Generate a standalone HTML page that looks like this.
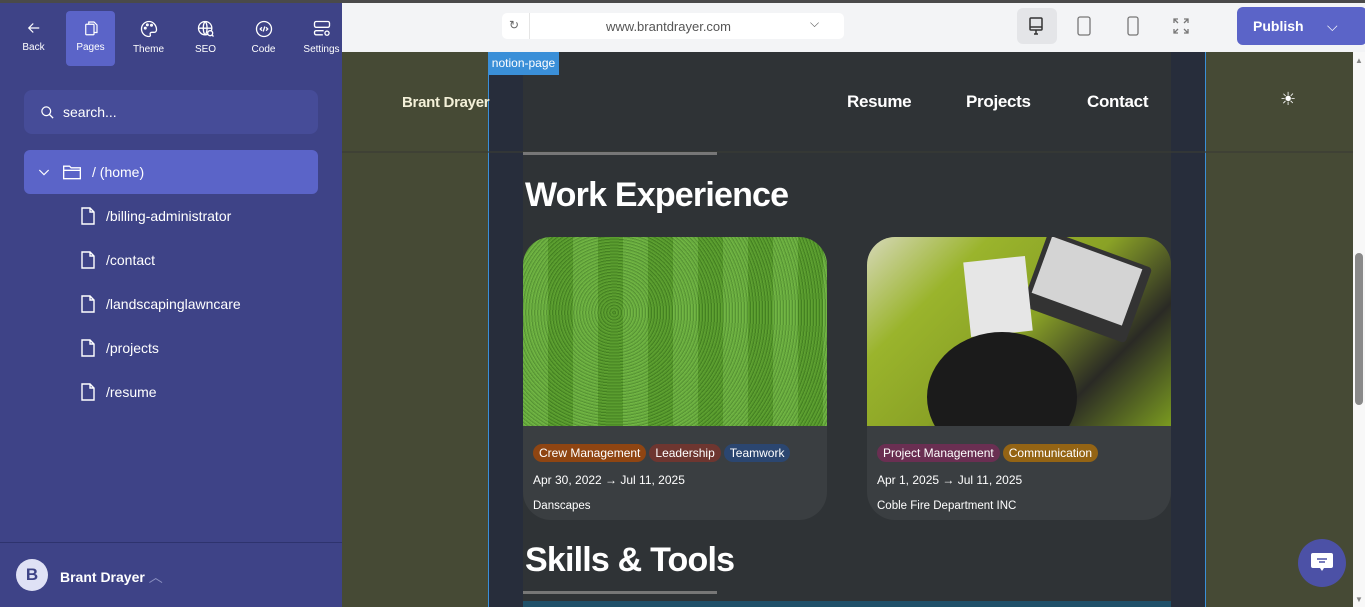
<!DOCTYPE html>
<html><head><meta charset="utf-8"><style>
*{margin:0;padding:0;box-sizing:border-box}
body{width:1365px;height:607px;overflow:hidden;font-family:"Liberation Sans",sans-serif;background:#464a35;position:relative}
.abs{position:absolute}
.side{left:0;top:0;width:342px;height:607px;background:#3e4387;color:#fff}
.topline{left:0;top:0;width:1365px;height:3px;background:#4a4a4a;z-index:5}
.tool{position:absolute;top:11px;width:49px;height:55px;text-align:center;font-size:10px;color:#fff}
.tool svg{display:block;margin:8px auto 5px}
.item{position:absolute;left:80px;font-size:14px;color:#fff;display:flex;align-items:center;gap:10px}
.tb{left:342px;top:3px;width:1023px;height:49px;background:#f3f4f6}
.tag{display:inline-block;font-size:12px;color:#fff;padding:2px 6px;border-radius:10px;margin-right:3px;line-height:14px}
.card{position:absolute;top:237px;width:304px;height:283px;background:#3a3e41;border-radius:28px;overflow:hidden}
.card .img{height:189px;position:relative;overflow:hidden}
.card .body{padding:18px 10px;color:#fff;font-size:12px}
h2{position:absolute;color:#fff;font-weight:bold;letter-spacing:-0.8px}
</style></head><body>
<div class="abs topline"></div>
<div class="abs side">
  <div class="tool" style="left:9px;"><svg width="18" height="18" viewBox="0 0 24 24" fill="none" stroke="#fff" stroke-width="1.6"><path d="M19 12H5M11 6l-6 6 6 6"/></svg>Back</div>
  <div class="tool" style="left:66px;background:#5b64c8;border-radius:4px;"><svg width="18" height="18" viewBox="0 0 24 24" fill="none" stroke="#fff" stroke-width="1.6"><path d="M9 7V4h7l4 4v10h-4"/><rect x="5" y="7" width="11" height="14" rx="1"/></svg>Pages</div>
  <div class="tool" style="left:124px;"><svg width="20" height="20" viewBox="0 0 24 24" fill="none" stroke="#fff" stroke-width="1.6"><path d="M12 3a9 9 0 100 18c1.5 0 2-1 1.5-2.3-.6-1.5.3-2.7 1.8-2.7H18a3 3 0 003-3c0-5.5-4-10-9-10z"/><circle cx="7.5" cy="11" r="1"/><circle cx="10" cy="7" r="1"/><circle cx="15" cy="7.5" r="1"/></svg>Theme</div>
  <div class="tool" style="left:181px;"><svg width="20" height="20" viewBox="0 0 24 24" fill="none" stroke="#fff" stroke-width="1.6"><circle cx="11" cy="11" r="8"/><path d="M3 11h16M11 3c-3 3-3 13 0 16M11 3c3 3 3 13 0 16"/><circle cx="17" cy="17" r="3" fill="#3e4387"/><path d="M19 19l2 2"/></svg>SEO</div>
  <div class="tool" style="left:239px;"><svg width="20" height="20" viewBox="0 0 24 24" fill="none" stroke="#fff" stroke-width="1.6"><circle cx="12" cy="12" r="9"/><path d="M9.5 10l-2 2 2 2M14.5 10l2 2-2 2M13 9l-2 6"/></svg>Code</div>
  <div class="tool" style="left:297px;"><svg width="20" height="20" viewBox="0 0 24 24" fill="none" stroke="#fff" stroke-width="1.6"><rect x="3" y="3" width="18" height="7" rx="2"/><path d="M14 14H5a2 2 0 00-2 2v1a2 2 0 002 2h8"/><circle cx="18" cy="17" r="2.5"/></svg>Settings</div>
  <div class="abs" style="left:24px;top:90px;width:294px;height:44px;background:#464c98;border-radius:8px;display:flex;align-items:center;padding-left:16px;font-size:14px;gap:8px"><svg width="15" height="15" viewBox="0 0 24 24" fill="none" stroke="#fff" stroke-width="2"><circle cx="10" cy="10" r="7"/><path d="M15 15l6 6"/></svg>search...</div>
  <div class="abs" style="left:24px;top:150px;width:294px;height:44px;background:#5b64c8;border-radius:6px;display:flex;align-items:center;padding-left:12px;font-size:14px;gap:10px"><svg width="16" height="16" viewBox="0 0 24 24" fill="none" stroke="#fff" stroke-width="1.8"><path d="M5 9l7 7 7-7"/></svg><svg width="20" height="18" viewBox="0 0 24 20" fill="none" stroke="#fff" stroke-width="1.6"><path d="M2 3h7l2 2h11v13H2z M2 8h20"/></svg>/ (home)</div>
  <div class="item" style="top:207px"><svg width="16" height="18" viewBox="0 0 16 18" fill="none" stroke="#fff" stroke-width="1.4"><path d="M2 1h8l4 4v12H2z M10 1v4h4"/></svg>/billing-administrator</div>
  <div class="item" style="top:251px"><svg width="16" height="18" viewBox="0 0 16 18" fill="none" stroke="#fff" stroke-width="1.4"><path d="M2 1h8l4 4v12H2z M10 1v4h4"/></svg>/contact</div>
  <div class="item" style="top:295px"><svg width="16" height="18" viewBox="0 0 16 18" fill="none" stroke="#fff" stroke-width="1.4"><path d="M2 1h8l4 4v12H2z M10 1v4h4"/></svg>/landscapinglawncare</div>
  <div class="item" style="top:339px"><svg width="16" height="18" viewBox="0 0 16 18" fill="none" stroke="#fff" stroke-width="1.4"><path d="M2 1h8l4 4v12H2z M10 1v4h4"/></svg>/projects</div>
  <div class="item" style="top:383px"><svg width="16" height="18" viewBox="0 0 16 18" fill="none" stroke="#fff" stroke-width="1.4"><path d="M2 1h8l4 4v12H2z M10 1v4h4"/></svg>/resume</div>
  <div class="abs" style="left:0;top:542px;width:342px;height:1px;background:#2e336e"></div>
  <div class="abs" style="left:16px;top:559px;width:32px;height:32px;border-radius:50%;background:#dfe1f5;color:#3e4387;font-weight:bold;font-size:17px;text-align:center;line-height:32px">B</div>
  <div class="abs" style="left:60px;top:567px;font-size:14px;font-weight:bold">Brant Drayer <span style="color:#8a8fc0;font-weight:normal">︿</span></div>
</div>
<div class="abs tb">
  <div class="abs" style="left:160px;top:10px;width:342px;height:26px;background:#fff;border-radius:5px"></div>
  <div class="abs" style="left:187px;top:10px;width:1px;height:26px;background:#e5e5e5"></div>
  <div class="abs" style="left:167px;top:15px;font-size:12px;color:#666">↻</div>
  <div class="abs" style="left:264px;top:16px;font-size:13px;color:#555">www.brantdrayer.com</div>
  <div class="abs" style="left:468px;top:13px;font-size:12px;color:#555">⌵</div>
  <div class="abs" style="left:675px;top:5px;width:40px;height:36px;background:#e4e5e8;border-radius:6px"></div>
  <svg class="abs" style="left:686px;top:13px" width="16" height="20" viewBox="0 0 16 20" fill="none" stroke="#333" stroke-width="1.5"><rect x="2" y="2" width="12" height="12" rx="1"/><path d="M2 11h12M6 18h4M8 14v4"/></svg>
  <svg class="abs" style="left:735px;top:13px" width="14" height="20" viewBox="0 0 14 20" fill="none" stroke="#777" stroke-width="1.3"><rect x="1" y="1" width="12" height="18" rx="2"/></svg>
  <svg class="abs" style="left:785px;top:13px" width="12" height="20" viewBox="0 0 12 20" fill="none" stroke="#777" stroke-width="1.3"><rect x="1" y="1" width="10" height="18" rx="2"/></svg>
  <svg class="abs" style="left:831px;top:15px" width="16" height="16" viewBox="0 0 16 16" fill="none" stroke="#777" stroke-width="1.3"><path d="M1 5V1h4M11 1h4v4M15 11v4h-4M5 15H1v-4M1 1l4 4M15 1l-4 4M15 15l-4-4M1 15l4-4"/></svg>
  <div class="abs" style="left:895px;top:4px;width:130px;height:38px;background:#5b64c8;border-radius:6px;color:#fff;font-size:14px;font-weight:bold;line-height:38px;padding-left:16px">Publish<span style="position:absolute;left:90px;font-weight:normal">⌵</span></div>
</div>
<div class="abs" style="left:488px;top:52px;width:718px;height:555px;background:#272d3b;border-left:1px solid #3a8fd8;border-right:1px solid #3a8fd8"></div>
<div class="abs" style="left:523px;top:52px;width:648px;height:555px;background:#2f3336"></div>
<div class="abs" style="left:342px;top:151px;width:1011px;height:2px;background:#3a3c35;opacity:.6"></div>
<div class="abs" style="left:488px;top:52px;width:71px;height:23px;background:#3a8fd8;color:#fff;font-size:12px;line-height:23px;text-align:center">notion-page</div>
<div class="abs" style="left:402px;top:94px;color:#f3f0d8;font-size:15px;font-weight:bold;letter-spacing:-0.3px">Brant Drayer</div>
<div class="abs" style="left:847px;top:92px;color:#fff;font-size:17px;font-weight:bold;letter-spacing:-0.3px">Resume</div>
<div class="abs" style="left:966px;top:92px;color:#fff;font-size:17px;font-weight:bold;letter-spacing:-0.3px">Projects</div>
<div class="abs" style="left:1087px;top:92px;color:#fff;font-size:17px;font-weight:bold;letter-spacing:-0.3px">Contact</div>
<div class="abs" style="left:1280px;top:89px;color:#fff;font-size:18px">☀</div>
<div class="abs" style="left:523px;top:152px;width:194px;height:3px;background:#777"></div>
<h2 style="left:525px;top:176px;font-size:34px">Work Experience</h2>
<div class="card" style="left:523px"><div class="img" style="background:repeating-linear-gradient(90deg,rgba(255,255,255,.07) 0 25px,rgba(0,0,0,.08) 25px 50px),repeating-radial-gradient(circle at 30% 40%,#5da530 0 1px,#4a8c25 1px 2px,#67b036 2px 3px);"></div>
<div class="body"><span class="tag" style="background:#8f4512">Crew Management</span><span class="tag" style="background:#6e3630">Leadership</span><span class="tag" style="background:#2b4670">Teamwork</span>
<div style="margin-top:11px">Apr 30, 2022 → Jul 11, 2025</div><div style="margin-top:13px;font-size:11.5px">Danscapes</div></div></div>
<div class="card" style="left:867px"><div class="img" style="background:linear-gradient(135deg,#d6d8b8 0%,#9ab42c 25%,#8aa226 50%,#2a2a25 75%,#7a9a20 100%)">
<div style="position:absolute;left:165px;top:10px;width:110px;height:80px;background:#333;transform:rotate(20deg);border-radius:4px"></div>
<div style="position:absolute;left:172px;top:14px;width:96px;height:60px;background:#d4d4d4;transform:rotate(20deg)"></div>
<div style="position:absolute;left:100px;top:22px;width:62px;height:75px;background:#e6e6e6;transform:rotate(-6deg)"></div>
<div style="position:absolute;left:60px;top:95px;width:150px;height:130px;background:#1b1b1b;border-radius:50%"></div></div>
<div class="body"><span class="tag" style="background:#6a2f52">Project Management</span><span class="tag" style="background:#946414">Communication</span>
<div style="margin-top:11px">Apr 1, 2025 → Jul 11, 2025</div><div style="margin-top:13px;font-size:11.5px">Coble Fire Department INC</div></div></div>
<h2 style="left:525px;top:541px;font-size:34px">Skills &amp; Tools</h2>
<div class="abs" style="left:523px;top:591px;width:194px;height:3px;background:#777"></div>
<div class="abs" style="left:523px;top:601px;width:648px;height:6px;background:#1f5069"></div>
<div class="abs" style="left:1298px;top:539px;width:48px;height:48px;border-radius:50%;background:#4c51a6"></div>
<svg class="abs" style="left:1310px;top:552px" width="24" height="22" viewBox="0 0 24 22"><path d="M3 1h18a2 2 0 012 2v11a2 2 0 01-2 2h-7l-2 3-2-3H3a2 2 0 01-2-2V3a2 2 0 012-2z" fill="#fff"/><path d="M7 7h10M9 10h6" stroke="#4c51a6" stroke-width="1.5"/></svg>
<div class="abs" style="left:1353px;top:52px;width:12px;height:555px;background:#f8f8f8"></div>
<div class="abs" style="left:1355px;top:253px;width:8px;height:152px;background:#8a8a8a;border-radius:4px"></div>
<div class="abs" style="left:1355px;top:56px;font-size:8px;color:#888">▲</div>
<div class="abs" style="left:1355px;top:595px;font-size:8px;color:#888">▼</div>
</body></html>
